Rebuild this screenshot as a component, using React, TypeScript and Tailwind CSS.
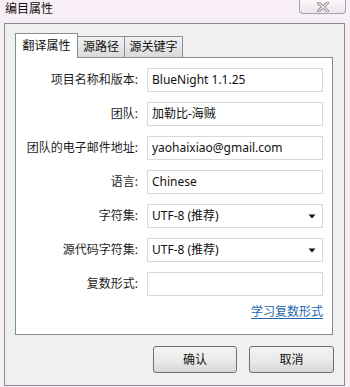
import React from "react";

const font = { fontFamily: '"Segoe UI", "Noto Sans", "Noto Sans CJK SC", sans-serif' };

function Row({ label, children }: { label: string; children: React.ReactNode }) {
  return (
    <div className="flex items-center h-[24px]">
      <div className="w-[122px] text-right text-[12px] text-[#1e1e1e] leading-none">{label}</div>
      <div className="ml-[9px]">{children}</div>
    </div>
  );
}

function Input({ value }: { value: string }) {
  return (
    <div className="w-[176px] h-[24px] border border-[#d7d9dd] bg-white flex items-center pl-[4px] text-[12px] text-[#111] leading-none">
      {value}
    </div>
  );
}

function Select({ value }: { value: string }) {
  return (
    <div className="w-[176px] h-[24px] border border-[#d7d9dd] bg-white flex items-center justify-between pl-[4px] pr-[6px] text-[12px] text-[#111] leading-none">
      <span>{value}</span>
      <svg width="8" height="5" viewBox="0 0 8 5">
        <path d="M0.5 0.5 L7.5 0.5 L4 4.5 Z" fill="#111" />
      </svg>
    </div>
  );
}

export default function App() {
  return (
    <div className="w-[350px] h-[387px] bg-[#f7eff5] flex flex-col overflow-hidden" style={font}>
      <div className="h-[23px] flex justify-between items-start">
        <div className="pl-[5px] pt-[2px] text-[12px] text-[#111] leading-[14px]">编目属性</div>
        <div className="mr-[4px] w-[47px] h-[14px] border border-t-0 border-[#a9a3a8] rounded-b-[4px] bg-gradient-to-b from-[#fbf6fa] to-[#ece4ea] flex items-center justify-center">
          <svg width="12" height="10" viewBox="0 0 12 10">
            <path d="M1.5 1 L10.5 9 M10.5 1 L1.5 9" stroke="#8a8a8a" strokeWidth="3" strokeLinecap="square" />
            <path d="M1.5 1 L10.5 9 M10.5 1 L1.5 9" stroke="#f4f0f3" strokeWidth="1.2" strokeLinecap="square" />
          </svg>
        </div>
      </div>
      <div className="ml-[4px] mr-[5px] h-[363px] border border-[#8b8b8b] bg-[#f0f0f0] pl-[10px] pt-[9px] flex flex-col">
        <div className="flex items-end h-[24px] relative z-10">
          <div className="w-[63px] h-[25px] border border-b-0 border-[#898c95] bg-white flex items-center justify-center text-[12px] text-[#111] leading-none -mb-[1px]">
            翻译属性
          </div>
          <div className="w-[47px] h-[21px] border border-l-0 border-b-0 border-[#898c95] bg-gradient-to-b from-[#f2f2f2] to-[#dadada] flex items-center justify-center text-[12px] text-[#111] leading-none">
            源路径
          </div>
          <div className="w-[58px] h-[21px] border border-l-0 border-b-0 border-[#898c95] bg-gradient-to-b from-[#f2f2f2] to-[#dadada] flex items-center justify-center text-[12px] text-[#111] leading-none">
            源关键字
          </div>
        </div>
        <div className="w-[318px] h-[278px] border border-[#898c95] bg-white pt-[10px] flex flex-col gap-[10px]">
          <Row label="项目名称和版本:"><Input value="BlueNight 1.1.25" /></Row>
          <Row label="团队:"><Input value="加勒比-海贼" /></Row>
          <Row label="团队的电子邮件地址:"><Input value="yaohaixiao@gmail.com" /></Row>
          <Row label="语言:"><Input value="Chinese" /></Row>
          <Row label="字符集:"><Select value="UTF-8 (推荐)" /></Row>
          <Row label="源代码字符集:"><Select value="UTF-8 (推荐)" /></Row>
          <Row label="复数形式:"><Input value="" /></Row>
          <div className="flex justify-end pr-[9px] -mt-[1px]">
            <span className="text-[12px] leading-[14px] text-[#1c68b0] underline underline-offset-2">学习复数形式</span>
          </div>
        </div>
        <div className="flex justify-end gap-[12px] pr-[10px] mt-[11px]">
          <div className="w-[84px] h-[27px] border border-[#707070] rounded-[3px] bg-gradient-to-b from-[#f2f2f2] via-[#ebebeb] to-[#d7d7d7] flex items-center justify-center text-[12px] text-[#111]">
            确认
          </div>
          <div className="w-[85px] h-[27px] border border-[#707070] rounded-[3px] bg-gradient-to-b from-[#f2f2f2] via-[#ebebeb] to-[#d7d7d7] flex items-center justify-center text-[12px] text-[#111]">
            取消
          </div>
        </div>
      </div>
    </div>
  );
}
